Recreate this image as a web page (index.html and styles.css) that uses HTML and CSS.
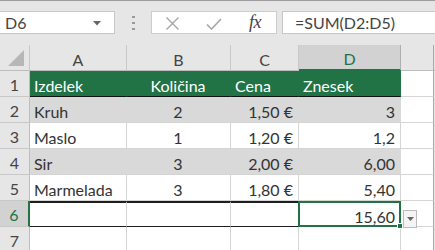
FILE: index.html
```html
<!DOCTYPE html>
<html>
<head>
<meta charset="utf-8">
<link rel="stylesheet" href="styles.css">
</head>
<body>
<div class="app">
  <div class="fbar">
    <div class="namebox">
      <span class="nb-text">D6</span>
      <svg class="nb-arrow" width="8" height="5" viewBox="0 0 8 5"><path d="M0 0H8L4 4.5Z" fill="#666"/></svg>
    </div>
    <div class="dots"><i></i><i></i><i></i></div>
    <div class="fbtns">
      <svg class="ic-x" width="15" height="13" viewBox="0 0 15 13"><path d="M1.5 0.5L13.5 12.5M13.5 0.5L1.5 12.5" stroke="#a6a6a6" stroke-width="1.4" fill="none"/></svg>
      <svg class="ic-check" width="16" height="12" viewBox="0 0 16 12"><path d="M1 6.5L5.5 11L15 1" stroke="#a6a6a6" stroke-width="1.6" fill="none"/></svg>
      <span class="fx">fx</span>
    </div>
    <div class="formula">=SUM(D2:D5)</div>
  </div>
  <div class="sheet">
    <div class="ch corner"><svg width="18" height="18" viewBox="0 0 18 18"><path d="M17 1V17H1Z" fill="#b7b7b7"/></svg></div>
    <div class="ch">A</div>
    <div class="ch">B</div>
    <div class="ch">C</div>
    <div class="ch sel-col">D</div>
    <div class="ch edge"></div>
    <div class="ch rest"></div>

    <div class="rh">1</div>
    <div class="c hd">Izdelek</div>
    <div class="c hd ctr">Količina</div>
    <div class="c hd">Cena</div>
    <div class="c hd">Znesek</div>
    <div class="c edge"></div>
    <div class="c rest"></div>

    <div class="rh">2</div>
    <div class="c band">Kruh</div>
    <div class="c band ctr">2</div>
    <div class="c band num">1,50 €</div>
    <div class="c band num">3</div>
    <div class="c edge"></div>
    <div class="c rest"></div>

    <div class="rh">3</div>
    <div class="c">Maslo</div>
    <div class="c ctr">1</div>
    <div class="c num">1,20 €</div>
    <div class="c num">1,2</div>
    <div class="c edge"></div>
    <div class="c rest"></div>

    <div class="rh">4</div>
    <div class="c band">Sir</div>
    <div class="c band ctr">3</div>
    <div class="c band num">2,00 €</div>
    <div class="c band num">6,00</div>
    <div class="c edge"></div>
    <div class="c rest"></div>

    <div class="rh">5</div>
    <div class="c">Marmelada</div>
    <div class="c ctr">3</div>
    <div class="c num">1,80 €</div>
    <div class="c num">5,40</div>
    <div class="c edge"></div>
    <div class="c rest"></div>

    <div class="rh sel-row">6</div>
    <div class="c tot"></div>
    <div class="c tot"></div>
    <div class="c tot"></div>
    <div class="c num active">15,60<span class="handle"></span><span class="optbtn"><svg width="7" height="4" viewBox="0 0 7 4"><path d="M0 0H7L3.5 4Z" fill="#666"/></svg></span></div>
    <div class="c edge"></div>
    <div class="c rest"></div>

    <div class="rh">7</div>
    <div class="c"></div>
    <div class="c"></div>
    <div class="c"></div>
    <div class="c"></div>
    <div class="c edge"></div>
    <div class="c rest"></div>
  </div>
</div>
</body>
</html>
```

FILE: styles.css
```css
* { box-sizing: border-box; }
html, body { margin: 0; padding: 0; }
body {
  width: 435px;
  height: 250px;
  overflow: hidden;
  background: #e6e6e6;
  font-family: Lato, "Open Sans", sans-serif;
  color: #333;
}
.app {
  border-top: 1px solid #9c9c9c;
  height: 250px;
  display: flex;
  flex-direction: column;
}
.fbar {
  display: flex;
  align-items: stretch;
  height: 31px;
  margin-top: 10px;
  margin-bottom: 11px;
}
.namebox {
  width: 116px;
  margin-left: -1px;
  background: #fff;
  border: 1px solid #c6c6c6;
  display: flex;
  align-items: center;
  justify-content: space-between;
  padding: 0 13px 0 5px;
}
.nb-text { font-size: 16px; color: #444; }
.nb-arrow { margin-top: 1px; }
.dots {
  width: 36px;
  display: flex;
  flex-direction: column;
  align-items: center;
  justify-content: center;
  gap: 4px;
}
.dots i {
  display: block;
  width: 3px;
  height: 2px;
  background: #9a9a9a;
}
.fbtns {
  width: 126px;
  background: #fff;
  border: 1px solid #cdcdcd;
  display: flex;
  align-items: center;
  padding-left: 13px;
}
.ic-x { margin-top: 1px; }
.ic-check { margin-left: 26px; margin-top: 2px; }
.fx {
  margin-left: 27px;
  font-family: "Liberation Serif", serif;
  font-style: italic;
  font-size: 18px;
  color: #444;
  letter-spacing: -0.5px;
}
.formula {
  flex: 1;
  margin-left: 5px;
  margin-right: -1px;
  background: #fff;
  border: 1px solid #c6c6c6;
  display: flex;
  align-items: center;
  padding-left: 12px;
  font-size: 16px;
  color: #444;
}
.sheet {
  flex: 1;
  display: grid;
  grid-template-columns: 30px 97px 104px 68px 102px 33px 1fr;
  grid-template-rows: 26px repeat(7, 26px);
  background: #fff;
  font-size: 16px;
}
.ch {
  background: #e6e6e6;
  border-right: 1px solid #c8c8c8;
  border-bottom: 1px solid #bdbdbd;
  display: flex;
  align-items: center;
  justify-content: center;
  color: #444;
  font-size: 16px;
  padding-top: 3px;
}
.corner {
  align-items: flex-end;
  justify-content: flex-end;
  padding: 0 4px 3px 0;
}
.sel-col {
  background: #d2d2d2;
  color: #217346;
  border-bottom: 2px solid #217346;
  border-right-color: #b0b0b0;
}
.ch.edge { border-right: 1px solid #a9a9a9; }
.ch.rest { border-right: none; }
.rh {
  background: #e6e6e6;
  border-right: 1px solid #bdbdbd;
  border-bottom: 1px solid #c8c8c8;
  display: flex;
  align-items: center;
  justify-content: center;
  color: #444;
  padding-top: 2px;
}
.sel-row {
  background: #d2d2d2;
  color: #217346;
  border-right: 2px solid #217346;
}
.c {
  position: relative;
  border-right: 1px solid #d4d4d4;
  border-bottom: 1px solid #d4d4d4;
  display: flex;
  align-items: center;
  padding: 3px 5px 0 4px;
  white-space: nowrap;
  color: #333;
}
.ctr { justify-content: center; }
.num { justify-content: flex-end; }
.hd {
  background: #217346;
  color: #fff;
  border-right-color: #217346;
  border-bottom: 1px solid #111;
}
.band {
  background: #d9d9d9;
  border-right-color: #d9d9d9;
}
.c.edge { border-right: 1px solid #a9a9a9; }
.c.rest { border-right: none; background: #e6e6e6; border-bottom: none; }
.tot {
  border-top: 2px solid #1e1e1e;
  border-bottom: 1px solid #1e1e1e;
  border-right-color: #d4d4d4;
}
.active {
  border-top: 2px solid #1e1e1e;
  border-bottom: 1px solid #1e1e1e;
}
.active::after {
  content: "";
  position: absolute;
  left: -1px;
  top: -2px;
  right: -1px;
  bottom: -1px;
  border: 2px solid #217346;
}
.handle {
  position: absolute;
  right: -3px;
  bottom: -3px;
  width: 6px;
  height: 6px;
  background: #217346;
  border: 1px solid #fff;
  z-index: 2;
}
.optbtn {
  position: absolute;
  left: 104px;
  top: 7px;
  width: 14px;
  height: 18px;
  background: #f4f4f4;
  border: 1px solid #bcbcbc;
  display: flex;
  align-items: center;
  justify-content: center;
  z-index: 2;
}
```
